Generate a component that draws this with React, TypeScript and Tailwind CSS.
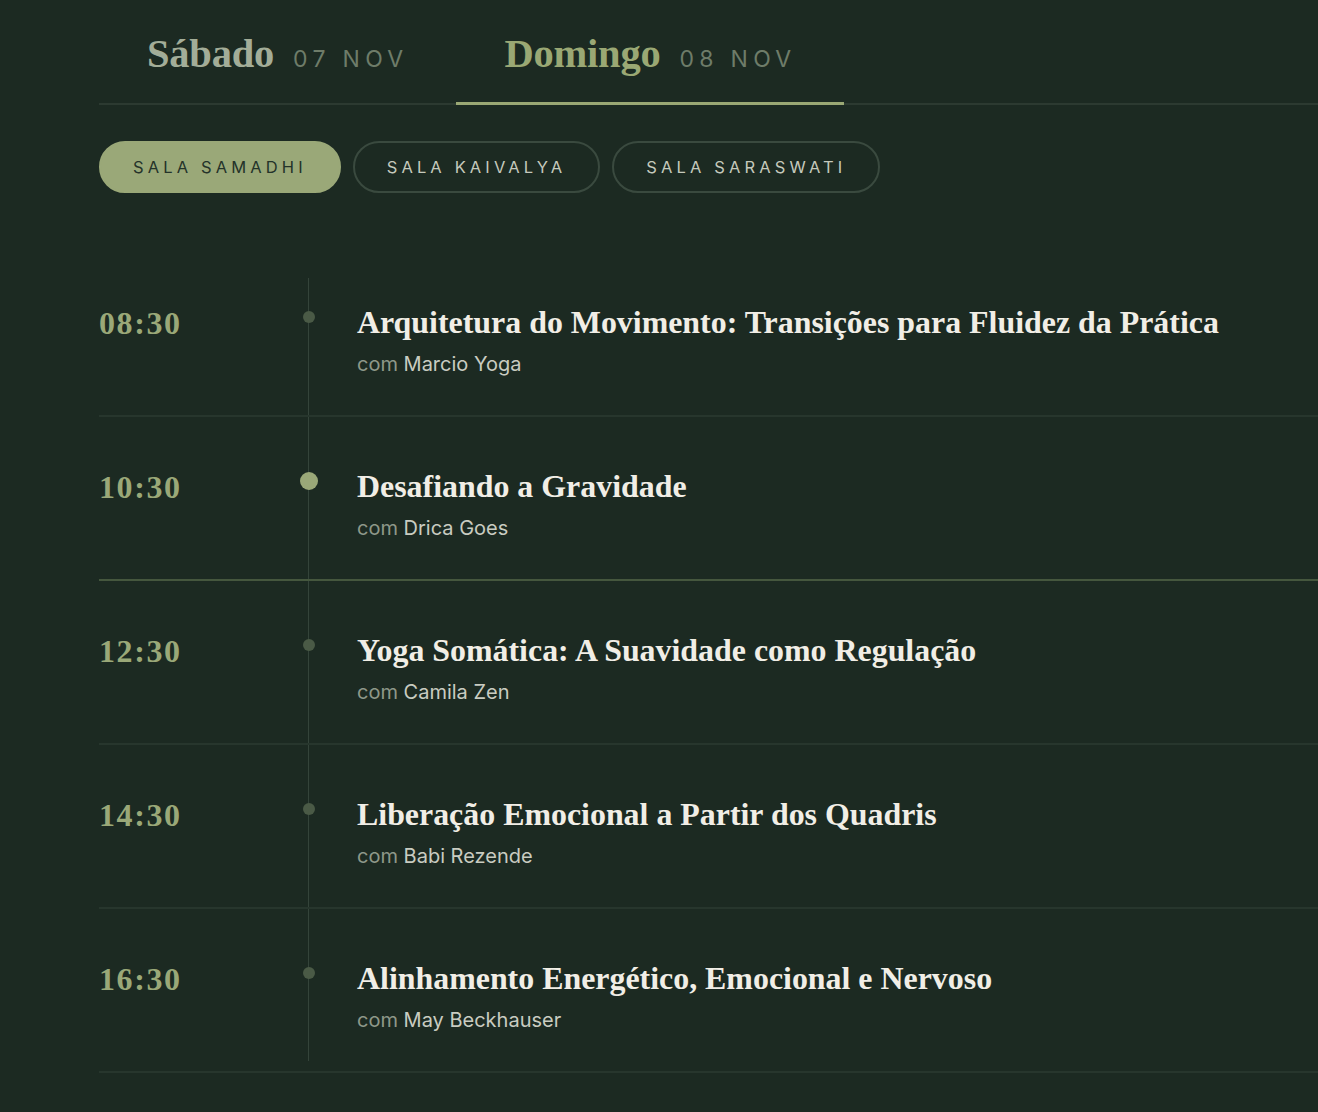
import { useState } from 'react'

const sessions = [
  { time: '08:30', title: 'Arquitetura do Movimento: Transições para Fluidez da Prática', teacher: 'Marcio Yoga' },
  { time: '10:30', title: 'Desafiando a Gravidade', teacher: 'Drica Goes' },
  { time: '12:30', title: 'Yoga Somática: A Suavidade como Regulação', teacher: 'Camila Zen' },
  { time: '14:30', title: 'Liberação Emocional a Partir dos Quadris', teacher: 'Babi Rezende' },
  { time: '16:30', title: 'Alinhamento Energético, Emocional e Nervoso', teacher: 'May Beckhauser' },
]

const days = [
  { name: 'Sábado', date: '07 NOV' },
  { name: 'Domingo', date: '08 NOV' },
]

const rooms = ['Sala Samadhi', 'Sala Kaivalya', 'Sala Saraswati']

const serif = "font-['Liberation_Serif',serif]"
const sans = "font-['Inter',sans-serif]"

export default function App() {
  const [day, setDay] = useState(1)
  const [room, setRoom] = useState(0)
  const active = 1

  return (
    <div className="min-h-screen bg-[#1c2a22] pl-[99px] overflow-hidden">
      {/* tabs */}
      <div className="flex border-b-2 border-[#2c3a31] pt-[26px]">
        {days.map((d, i) => (
          <button
            key={d.name}
            onClick={() => setDay(i)}
            className={`flex items-baseline gap-[19px] px-12 pb-[20px] -mb-[2px] border-b-[3px] ${
              day === i ? 'border-[#9aa874]' : 'border-transparent'
            }`}
          >
            <span
              className={`${serif} font-bold text-[40.5px] leading-[56px] tracking-[-0.005em] ${
                day === i ? 'text-[#9aa874]' : 'text-[#a3ad98]'
              }`}
            >
              {d.name}
            </span>
            <span className={`${sans} text-[23px] tracking-[0.23em] text-[#6e7c69]`}>{d.date}</span>
          </button>
        ))}
      </div>

      {/* rooms */}
      <div className="flex gap-3 mt-[36px]">
        {rooms.map((r, i) => (
          <button
            key={r}
            onClick={() => setRoom(i)}
            className={`${sans} h-[52px] px-8 rounded-full border-2 uppercase text-[16.5px] tracking-[0.25em] ${
              room === i
                ? 'bg-[#9aa878] border-[#9aa878] text-[#24332a]'
                : 'border-[#3a4a3f] text-[#c5c9bc]'
            }`}
          >
            {r}
          </button>
        ))}
      </div>

      {/* schedule */}
      <div className="relative mt-[60px]">
        <div className="absolute left-[209px] top-[25px] bottom-[12px] w-px bg-[#34443a]" />
        {sessions.map((s, i) => (
          <div
            key={s.time}
            className={`relative flex h-[164px] border-b-2 ${
              i === active ? 'border-[#45573e]' : 'border-[#27362d]'
            }`}
          >
            <div
              className={`${serif} font-bold w-[186px] pt-[52px] text-[32px] leading-[36px] tracking-[0.05em] text-[#9aa878]`}
            >
              {s.time}
            </div>
            <div className="w-[48px] flex justify-center">
              {i === active ? (
                <div className="mt-[55px] w-[18px] h-[18px] rounded-full bg-[#9aa878]" />
              ) : (
                <div className="mt-[58px] w-[12px] h-[12px] rounded-full bg-[#4a5a46]" />
              )}
            </div>
            <div className="ml-6 pt-[52px]">
              <div className={`${serif} font-bold text-[31.9px] leading-[36px] text-[#f1eee6]`}>
                {s.title}
              </div>
              <div className={`${sans} mt-[11px] text-[20px] leading-[24px]`}>
                <span className="text-[#8e9889]">com </span>
                <span className="text-[#c9ccc1]">{s.teacher}</span>
              </div>
            </div>
          </div>
        ))}
      </div>
    </div>
  )
}
